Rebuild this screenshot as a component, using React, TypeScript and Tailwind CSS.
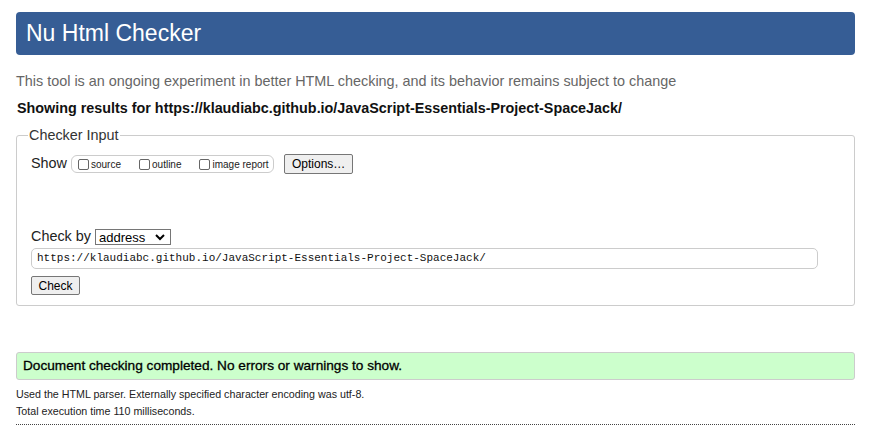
import React from "react";

const sans = { fontFamily: '"Liberation Sans", Arial, sans-serif' };

function Box({ label }: { label: string }) {
    return (
        <label className="flex items-center gap-[2px] text-[10px] text-[#222]">
            <span className="inline-block w-[11px] h-[11px] rounded-[2px] border border-[#666] bg-white" />
            {label}
        </label>
    );
}

export default function App() {
    return (
        <div style={sans} className="w-[879px] h-[440px] bg-white pl-4 pr-6 pt-3 text-black overflow-hidden">
            <div className="h-[43px] rounded-[4px] bg-[#365d95] flex items-center pl-[10px]">
                <h1 className="text-[23px] text-white leading-none">Nu Html Checker</h1>
            </div>

            <p className="mt-[18px] text-[14.4px] leading-4 text-[#666]">
                This tool is an ongoing experiment in better HTML checking, and its behavior remains subject to change
            </p>
            <p className="mt-[11px] ml-[1px] text-[14.35px] leading-4 font-bold text-[#111]">
                Showing results for https://klaudiabc.github.io/JavaScript-Essentials-Project-SpaceJack/
            </p>

            <fieldset className="mt-[10px] h-[180px] border border-[#ccc] rounded-[3px] pl-[14px] pr-[36px]">
                <legend className="ml-[-3px] px-[1px] text-[14.4px] text-[#333] leading-[18px]">Checker Input</legend>
                <div className="mt-[10px] flex items-center h-[20px]">
                    <span className="text-[14.4px] text-[#222]">Show</span>
                    <div className="ml-[4px] h-[18px] w-[203px] border border-[#ccc] rounded-[6px] flex items-center pl-[6px] gap-[18px]">
                        <Box label="source" />
                        <Box label="outline" />
                        <Box label="image report" />
                    </div>
                    <button className="ml-[10px] h-[20px] px-[7px] border border-[#767676] rounded-[2px] bg-[#efefef] text-[12px] text-black">
                        Options…
                    </button>
                </div>

                <div className="mt-[54px] flex items-center h-[18px]">
                    <span className="text-[14.4px] text-[#222]">Check by</span>
                    <div className="ml-[4px] h-[16px] w-[76px] border border-[#767676] flex items-center justify-between pl-[3px] pr-[5px] text-[13px] leading-none">
                        address
                        <svg width="10" height="7" viewBox="0 0 10 7" fill="none" stroke="black" strokeWidth="2">
                            <path d="M1 1l4 4 4-4" />
                        </svg>
                    </div>
                </div>
                <div
                    style={{ fontFamily: '"Liberation Mono", "DejaVu Sans Mono", monospace' }}
                    className="mt-[2px] h-[21px] border border-[#ccc] rounded-[5px] flex items-center pl-[5px] text-[11px] text-[#111]"
                >
                    https://klaudiabc.github.io/JavaScript-Essentials-Project-SpaceJack/
                </div>
                <button className="mt-[7px] h-[19px] w-[49px] border border-[#767676] rounded-[2px] bg-[#efefef] text-[12px] text-black">
                    Check
                </button>
            </fieldset>

            <div className="mt-[46px] h-[28px] border border-[#ccc] rounded-[3px] bg-[#ccffcc] flex items-center pl-[6px]">
                <p className="text-[13.65px] text-black [-webkit-text-stroke:0.3px_black]">
                    Document checking completed. No errors or warnings to show.
                </p>
            </div>
            <p className="mt-[8px] text-[10.7px] leading-[13px] text-[#222]">
                Used the HTML parser. Externally specified character encoding was utf-8.
            </p>
            <p className="mt-[4px] text-[10.7px] leading-[13px] text-[#222]">Total execution time 110 milliseconds.</p>
            <div className="mt-[6px] border-t border-dotted border-[#444]" />
        </div>
    );
}
